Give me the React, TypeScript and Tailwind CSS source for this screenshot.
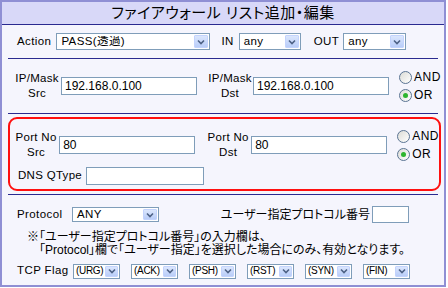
import React from 'react';

const font = "font-['Liberation_Sans','Noto_Sans_CJK_JP',sans-serif] [font-feature-settings:'palt']";

// XP風のセレクトボックス
const Sel = ({ w, text, h = 17, small }: { w: number; text: string; h?: number; small?: boolean }) => (
  <div
    className="flex shrink-0 items-center border border-[#7f9db9] bg-white p-px"
    style={{ width: w, height: h }}
  >
    <span
      className={
        small
          ? 'flex-1 pl-[1px] text-[10px] leading-none tracking-[-0.3px] text-black whitespace-nowrap'
          : 'flex-1 pl-[3px] text-[11.5px] leading-none text-black whitespace-nowrap overflow-hidden'
      }
    >
      {text}
    </span>
    <span
      className={
        small
          ? 'flex h-full w-[13px] shrink-0 items-center justify-center rounded-[1px] border border-[#c3d3fd] bg-gradient-to-b from-[#dbe6fd] to-[#b9cdf8]'
          : 'flex h-full w-[14px] shrink-0 items-center justify-center rounded-[1px] border border-[#c3d3fd] bg-gradient-to-b from-[#dbe6fd] to-[#b9cdf8]'
      }
    >
      <svg width="8" height="6" viewBox="0 0 8 6">
        <path d="M1 1.5 L4 4.5 L7 1.5" fill="none" stroke="#4d6185" strokeWidth="1.6" />
      </svg>
    </span>
  </div>
);

const Input = ({ w, value = '', h = 18 }: { w: number; value?: string; h?: number }) => (
  <div
    className="flex shrink-0 items-center border border-[#7f9db9] bg-white pl-[3px] text-[12px] leading-none text-black"
    style={{ width: w, height: h }}
  >
    {value}
  </div>
);

const Radio = ({ label, checked }: { label: string; checked?: boolean }) => (
  <div className="flex items-center gap-[2px] h-[18px]">
    <span className="flex h-[13px] w-[13px] items-center justify-center rounded-full border border-[#5a7493] bg-gradient-to-br from-[#dcdcd6] to-white">
      {checked && <span className="h-[5px] w-[5px] rounded-full bg-[#2db52d]" />}
    </span>
    <span className="text-[12px] leading-none tracking-[0.5px]">{label}</span>
  </div>
);

const Label2 = ({ a, b, w }: { a: string; b: string; w: number }) => (
  <div
    className="flex flex-col items-center text-[11.5px] leading-[15px] tracking-[0.3px] whitespace-nowrap"
    style={{ width: w }}
  >
    <span>{a}</span>
    <span>{b}</span>
  </div>
);

const Hr = () => <div className="mx-[6px] h-px shrink-0 bg-[#2a2a90]" />;

const AndOr = () => (
  <div className="ml-[10px] flex flex-col">
    <Radio label="AND" />
    <Radio label="OR" checked />
  </div>
);

const App = () => {
  return (
    <div className={`${font} h-[288px] w-[448px] bg-white text-black`}>
      <div className="flex h-[287px] w-[446px] flex-col border-2 border-[#8f8fd4] bg-[#f5f5fd]">
        {/* タイトル */}
        <div className="flex h-[23px] shrink-0 items-center justify-center border-b border-[#2a2a90] bg-[#d8d8f8] text-[15px] tracking-[0.5px]">
          ファイアウォール リスト追加・編集
        </div>

        {/* Action / IN / OUT */}
        <div className="flex h-[33px] shrink-0 items-center pl-[15px] text-[11.5px] tracking-[0.4px]">
          <span>Action</span>
          <div className="ml-[5px]">
            <Sel w={154} text="PASS(透過)" />
          </div>
          <span className="ml-[11px]">IN</span>
          <div className="ml-[5px]">
            <Sel w={62} text="any" />
          </div>
          <span className="ml-[13px]">OUT</span>
          <div className="ml-[4px]">
            <Sel w={63} text="any" />
          </div>
        </div>
        <Hr />

        {/* IP/Mask */}
        <div className="flex h-[54px] shrink-0 items-center pl-[12px]">
          <Label2 a="IP/Mask" b="Src" w={46} />
          <div className="ml-[1px]">
            <Input w={136} value="192.168.0.100" />
          </div>
          <div className="ml-[11px]">
            <Label2 a="IP/Mask" b="Dst" w={44} />
          </div>
          <div className="ml-[1px]">
            <Input w={136} value="192.168.0.100" />
          </div>
          <AndOr />
        </div>
        <Hr />

        {/* Port No / DNS QType */}
        <div className="h-[80px] shrink-0 pt-[3px] pl-[6px]">
          <div className="h-[74px] w-[433px] rounded-[9px] border-2 border-[#ff1010] pt-[8px] pl-[4px]">
            <div className="flex items-center">
              <Label2 a="Port No" b="Src" w={46} />
              <div className="ml-[1px]">
                <Input w={136} value="80" />
              </div>
              <div className="ml-[11px]">
                <Label2 a="Port No" b="Dst" w={44} />
              </div>
              <div className="ml-[1px]">
                <Input w={136} value="80" />
              </div>
              <AndOr />
            </div>
            <div className="mt-[4px] flex items-center pl-[4px] text-[11.5px] tracking-[0.3px]">
              <span>DNS QType</span>
              <div className="ml-[4px]">
                <Input w={118} />
              </div>
            </div>
          </div>
        </div>
        <Hr />

        {/* Protocol */}
        <div className="pl-[15px] pt-[11px] text-[11.5px] tracking-[0.4px]">
          <div className="flex h-[17px] items-center">
            <span className="w-[55px]">Protocol</span>
            <Sel w={87} text="ANY" h={15} />
            <span className="ml-auto mr-[2px] text-[12px] tracking-normal">ユーザー指定プロトコル番号</span>
            <div className="mr-[35px]">
              <Input w={37} h={17} />
            </div>
          </div>
          <div className="mt-[8px] text-[12px] leading-[13px] tracking-normal">
            <div className="pl-[10px]">※「ユーザー指定プロトコル番号」の入力欄は、</div>
            <div className="pl-[22px]">「Protocol」欄で「ユーザー指定」を選択した場合にのみ、有効となります。</div>
          </div>
          <div className="mt-[6px] flex h-[16px] items-center gap-[11px]">
            <span className="w-[45px] shrink-0 whitespace-nowrap">TCP Flag</span>
            {['(URG)', '(ACK)', '(PSH)', '(RST)', '(SYN)', '(FIN)'].map((f) => (
              <Sel key={f} w={47} text={f} h={15} small />
            ))}
          </div>
        </div>
      </div>
    </div>
  );
};

export default App;
